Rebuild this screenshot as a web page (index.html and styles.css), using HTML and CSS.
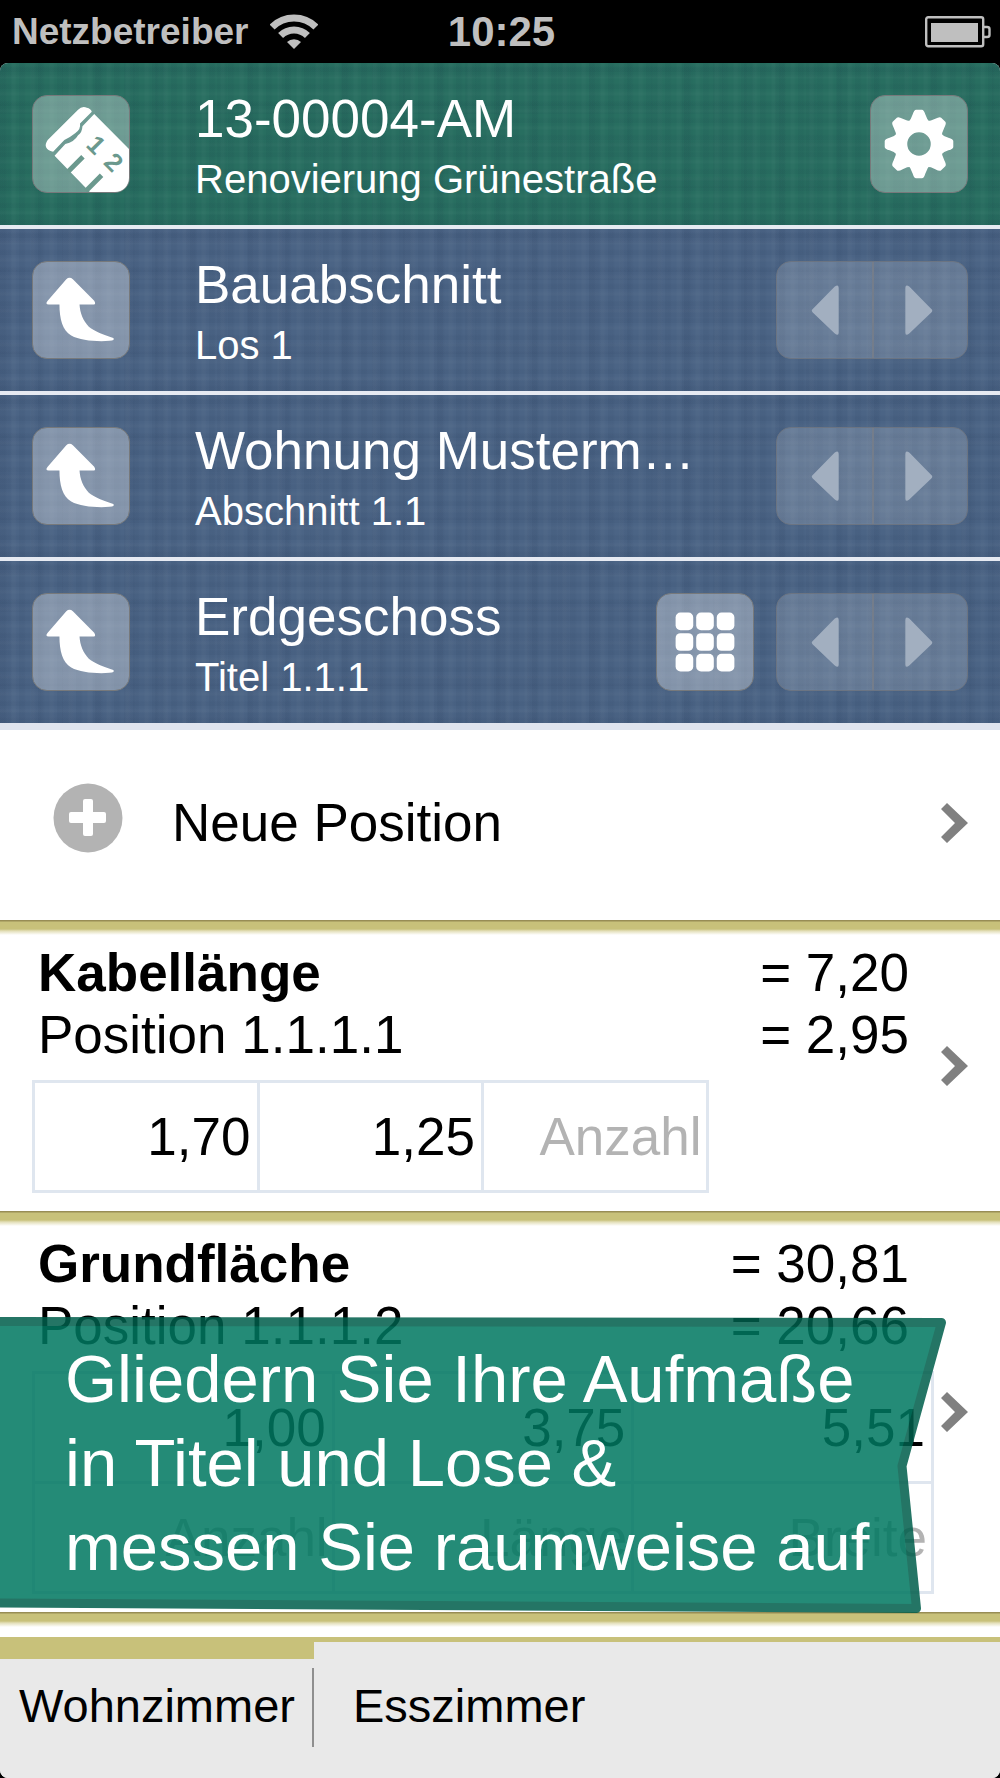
FILE: index.html
```html
<!DOCTYPE html>
<html lang="de">
<head>
    <meta charset="UTF-8">
    <meta name="viewport" content="width=device-width, initial-scale=1.0">
    <title>Aufmaß</title>
    <link rel="stylesheet" href="styles.css">
</head>
<body>
    <!-- shared icons -->
    <svg class="defs" aria-hidden="true">
        <symbol id="icon-up" viewBox="0 0 98 98">
            <path d="M34 17.5Q37.3 14.5 40.7 17.5L62.5 39.5Q65 43.5 61 43.5H47.5C48 52 51 60 57 66C63 71 72 74 82 77.5Q84 80 78 80.5C64 81.5 48 80 39 75C30 70 27 58 27 43.5H16Q12 43 15 39.5Z"/>
        </symbol>
        <symbol id="icon-left" viewBox="0 0 95 98">
            <path d="M35.5 48L58 25Q62 22 62 27V72Q62 76 58 73L35.5 51.5Q33.5 49.500 35.5 48Z"/>
        </symbol>
        <symbol id="icon-right" viewBox="0 0 95 98">
            <path d="M57.5 48L35 25Q31 22 31 27V72Q31 76 35 73L57.5 51.5Q59.5 49.500 57.5 48Z"/>
        </symbol>
        <symbol id="icon-chevron" viewBox="0 0 27 40">
            <path d="M6 0L27 20L6 40L0 34L14 20L0 6Z"/>
        </symbol>
    </svg>

    <div class="status-bar">
        <div class="carrier">
            <span>Netzbetreiber</span>
            <svg width="48" height="36" viewBox="0 0 48 36" aria-hidden="true">
                <path class="wave" d="M2.1 13.1A31 31 0 0 1 45.9 13.1"/>
                <path class="wave" d="M10.6 21.6A19 19 0 0 1 37.4 21.6"/>
                <path class="dot" d="M24 35L17 28A10 10 0 0 1 31 28Z"/>
            </svg>
        </div>
        <time class="clock">10:25</time>
        <svg class="battery" width="66" height="32" viewBox="0 0 66 32" aria-hidden="true">
            <rect class="line" x="1.2" y="1.2" width="57" height="29" rx="2"/>
            <path class="line" d="M58 11H62Q64.5 11 64.5 13V19Q64.5 21 62 21H58"/>
            <rect class="level" x="6" y="7" width="47" height="19"/>
        </svg>
    </div>

    <div class="app">
        <header>
            <div class="row project">
                <button class="icon-btn" aria-label="Projekt">
                    <svg viewBox="0 0 98 98">
                        <path d="M15 45L46 14Q50 10 55 12Q59 13 60 16L48 28Q49 34 43 38Q38 42 32 45L20.5 57Q9 54 15 45Z"/>
                        <path d="M62.5 18.5L98 54V98H58L22 61L33 49Q42 47 46 40Q50 38 50.5 31Z"/>
                        <path class="tick" d="M51 62L36 77M70 81L54 97"/>
                        <text class="digit" transform="translate(53 51) rotate(45)">1</text>
                        <text class="digit" transform="translate(71 69) rotate(45)">2</text>
                    </svg>
                </button>
                <div class="label">
                    <h1>13-00004-AM</h1>
                    <p>Renovierung Grünestraße</p>
                </div>
                <button class="icon-btn" aria-label="Einstellungen">
                    <svg viewBox="-49 -49 98 98">
                        <defs>
                            <path id="tooth" d="M-12 -21Q-8 -24.5 -6.5 -30Q-5 -35 -3 -35H3Q5 -35 6.5 -30Q8 -24.5 12 -21Z"/>
                        </defs>
                        <circle class="gear-ring" r="18.5"/>
                        <use href="#tooth"/>
                        <use href="#tooth" transform="rotate(45)"/>
                        <use href="#tooth" transform="rotate(90)"/>
                        <use href="#tooth" transform="rotate(135)"/>
                        <use href="#tooth" transform="rotate(180)"/>
                        <use href="#tooth" transform="rotate(225)"/>
                        <use href="#tooth" transform="rotate(270)"/>
                        <use href="#tooth" transform="rotate(315)"/>
                    </svg>
                </button>
            </div>

            <div class="row">
                <button class="icon-btn" aria-label="Nach oben"><svg><use href="#icon-up"/></svg></button>
                <div class="label">
                    <h2>Bauabschnitt</h2>
                    <p>Los 1</p>
                </div>
                <div class="pager">
                    <button disabled aria-label="Zurück"><svg><use href="#icon-left"/></svg></button>
                    <button disabled aria-label="Weiter"><svg><use href="#icon-right"/></svg></button>
                </div>
            </div>

            <div class="row">
                <button class="icon-btn" aria-label="Nach oben"><svg><use href="#icon-up"/></svg></button>
                <div class="label">
                    <h2>Wohnung Musterm…</h2>
                    <p>Abschnitt 1.1</p>
                </div>
                <div class="pager">
                    <button disabled aria-label="Zurück"><svg><use href="#icon-left"/></svg></button>
                    <button disabled aria-label="Weiter"><svg><use href="#icon-right"/></svg></button>
                </div>
            </div>

            <div class="row">
                <button class="icon-btn" aria-label="Nach oben"><svg><use href="#icon-up"/></svg></button>
                <div class="label">
                    <h2>Erdgeschoss</h2>
                    <p>Titel 1.1.1</p>
                </div>
                <button class="icon-btn" aria-label="Übersicht">
                    <svg viewBox="0 0 98 98">
                        <rect x="19" y="19" width="18" height="18" rx="5"/>
                        <rect x="40" y="19" width="18" height="18" rx="5"/>
                        <rect x="61" y="19" width="18" height="18" rx="5"/>
                        <rect x="19" y="40" width="18" height="18" rx="5"/>
                        <rect x="40" y="40" width="18" height="18" rx="5"/>
                        <rect x="61" y="40" width="18" height="18" rx="5"/>
                        <rect x="19" y="61" width="18" height="18" rx="5"/>
                        <rect x="40" y="61" width="18" height="18" rx="5"/>
                        <rect x="61" y="61" width="18" height="18" rx="5"/>
                    </svg>
                </button>
                <div class="pager">
                    <button disabled aria-label="Zurück"><svg><use href="#icon-left"/></svg></button>
                    <button disabled aria-label="Weiter"><svg><use href="#icon-right"/></svg></button>
                </div>
            </div>
        </header>

        <main>
            <button class="new-position">
                <svg class="plus" viewBox="0 0 70 70" aria-hidden="true">
                    <circle cx="35" cy="35" r="34.5"/>
                    <path d="M30 18Q30 16 32 16H38Q40 16 40 18V29H51Q53 29 53 31V38Q53 40 51 40H40V51Q40 53 38 53H32Q30 53 30 51V40H18Q16 40 16 38V31Q16 29 18 29H30Z"/>
                </svg>
                <span>Neue Position</span>
                <svg class="chevron"><use href="#icon-chevron"/></svg>
            </button>

            <article class="position">
                <div class="content">
                    <div class="line"><h3>Kabellänge</h3><span>= 7,20</span></div>
                    <div class="line"><span>Position 1.1.1.1</span><span>= 2,95</span></div>
                    <div class="fields short">
                        <input value="1,70" aria-label="Wert 1">
                        <input value="1,25" aria-label="Wert 2">
                        <input placeholder="Anzahl" aria-label="Anzahl">
                    </div>
                </div>
                <svg class="chevron"><use href="#icon-chevron"/></svg>
            </article>

            <article class="position">
                <div class="content">
                    <div class="line"><h3>Grundfläche</h3><span>= 30,81</span></div>
                    <div class="line"><span>Position 1.1.1.2</span><span>= 20,66</span></div>
                    <div class="fields">
                        <input value="1,00" aria-label="Wert 1">
                        <input value="3,75" aria-label="Wert 2">
                        <input value="5,51" aria-label="Wert 3">
                        <input placeholder="Anzahl" aria-label="Anzahl">
                        <input placeholder="Länge" aria-label="Länge">
                        <input placeholder="Breite" aria-label="Breite">
                    </div>
                </div>
                <svg class="chevron"><use href="#icon-chevron"/></svg>
            </article>

            <div class="banner">
                <svg viewBox="0 0 946 296" preserveAspectRatio="none" aria-hidden="true">
                    <path d="M-10 4.5L941.5 5.5L902 149L916.5 291.5L-10 286Z"/>
                </svg>
                <p>Gliedern Sie Ihre Aufmaße<br>in Titel und Lose &amp;<br>messen Sie raumweise auf</p>
            </div>
        </main>

        <div class="list-end"></div>

        <nav class="tabs">
            <a class="active" href="#wohnzimmer">Wohnzimmer</a>
            <a href="#esszimmer">Esszimmer</a>
        </nav>
    </div>
</body>
</html>
```
FILE: styles.css
```css
* { box-sizing: border-box; }
body { margin: 0; background: #000; color: #000; font-family: "Liberation Sans", Arial, sans-serif; font-size: 53px; line-height: 62px; }
h1, h2, h3, p { margin: 0; }
button { margin: 0; padding: 0; border: none; background: none; color: inherit; font: inherit; cursor: pointer; }
svg { display: block; }
.defs { position: absolute; width: 0; height: 0; }

/* status bar */
.status-bar { display: grid; grid-template-columns: 1fr auto 1fr; align-items: center; height: 63px; padding: 0 9px 0 12px; color: #bfbfbf; font-weight: bold; }
.carrier { display: flex; align-items: center; gap: 22px; font-size: 37px; }
.clock { font-size: 42px; }
.wave { fill: none; stroke: #bfbfbf; stroke-width: 7; }
.dot, .level { fill: #bfbfbf; }
.battery { justify-self: end; }
.battery .line { fill: none; stroke: #bfbfbf; stroke-width: 2.4; }

.app { overflow: hidden; border-radius: 8px; background: #fff; }

/* header rows, woven background */
header { border-bottom: 7px solid #dfe4ee; }
.row {
    display: flex; align-items: center; gap: 22px; height: 162px; padding: 0 32px; color: #fff;
    background-color: #4b6485;
    background-image:
        repeating-linear-gradient(90deg, rgba(0, 20, 50, 0.04) 0 5px, transparent 7px 11px, rgba(255, 255, 255, 0.02) 12px 15px, transparent 17px 19px),
        repeating-linear-gradient(90deg, rgba(0, 20, 50, 0.03) 0 9px, transparent 12px 31px),
        repeating-linear-gradient(0deg, rgba(0, 20, 50, 0.04) 0 4px, transparent 6px 10px, rgba(255, 255, 255, 0.02) 11px 13px, transparent 15px 17px),
        repeating-linear-gradient(0deg, rgba(0, 20, 50, 0.03) 0 9px, transparent 12px 37px);
}
.row + .row { height: 166px; border-top: 4px solid #e6eaf2; }
.row.project { background-color: #286e60; }
.label { flex: 1; min-width: 0; padding: 10px 0 0 43px; line-height: 60px; white-space: nowrap; }
.label h1, .label h2 { font-size: 53px; font-weight: normal; }
.label p { font-size: 40px; }
.icon-btn { flex: none; width: 98px; height: 98px; overflow: hidden; border: 1px solid #77797b; border-radius: 15px; background: rgba(255, 255, 255, 0.33); }
.icon-btn svg { width: 96px; height: 96px; fill: #fff; }
.gear-ring { fill: none; stroke: #fff; stroke-width: 13; }
.tick { stroke: #6b998e; stroke-width: 5; }
.digit { fill: #6b998e; font-size: 26px; font-weight: bold; }
.pager { display: flex; overflow: hidden; border: 1px solid #6b7482; border-radius: 15px; background: rgba(255, 255, 255, 0.17); }
.pager button { width: 95px; height: 96px; }
.pager button + button { border-left: 2px solid #747d8b; }
.pager svg { width: 95px; height: 96px; fill: #a2afc0; }

/* position list */
main { position: relative; }
.new-position { display: flex; align-items: center; width: 100%; height: 190px; padding: 0 32px 5px 53px; text-align: left; }
.new-position span { flex: 1; padding-left: 49px; }
.plus { width: 70px; height: 70px; margin-bottom: 10px; fill: #b3b3b3; }
.plus path { fill: #fff; }
.chevron { flex: none; width: 27px; height: 40px; fill: #808080; }
.position, .list-end { background: linear-gradient(#988d55 0 1px, #c8c17a 2px 9px, #e3dfb9 11px, #fff 15px) no-repeat; }
.position { display: flex; align-items: center; gap: 7px; padding: 0 32px; }
.content { flex: 1; min-width: 0; padding: 22px 0 18px; }
.line { display: flex; justify-content: space-between; padding: 0 25px 0 6px; }
.line h3 { font-size: 53px; }
.fields { display: grid; grid-template-columns: repeat(3, 1fr); gap: 3px; margin-top: 14px; padding: 3px; background: #dfe6ef; }
.fields.short { width: 75%; }
.fields input { width: 100%; min-width: 0; height: 107px; padding: 0 6px; border: none; border-radius: 0; background: #fff; color: #000; font: inherit; text-align: right; }
.fields input:placeholder-shown { padding: 0 4px; }
.fields input::placeholder { color: #b3b3b3; opacity: 1; }

/* caption flag over the list */
.banner { position: absolute; left: 0; bottom: -1px; width: 94.6%; height: 296px; padding: 20px 0 0 65px; color: #fff; font-size: 67px; line-height: 84px; white-space: nowrap; }
.banner svg { position: absolute; top: 0; left: 0; width: 100%; height: 100%; opacity: 0.855; }
.banner path { fill: #007861; stroke: #005e4b; stroke-width: 9; stroke-linejoin: round; }
.banner p { position: relative; }

.list-end { height: 25px; }

/* room tabs */
.tabs { display: flex; border-top: 5px solid #c8c17a; background: #e9e9e9; font-size: 47px; line-height: 60px; }
.tabs a { padding: 34px 39px 42px; color: #000; text-decoration: none; }
.tabs .active {
    padding: 34px 19px 42px;
    background: linear-gradient(#c8c17a, #c8c17a) 0 0 / 100% 17px no-repeat, linear-gradient(#8f8f8f, #8f8f8f) 100% 26px / 2px 79px no-repeat;
}
```
